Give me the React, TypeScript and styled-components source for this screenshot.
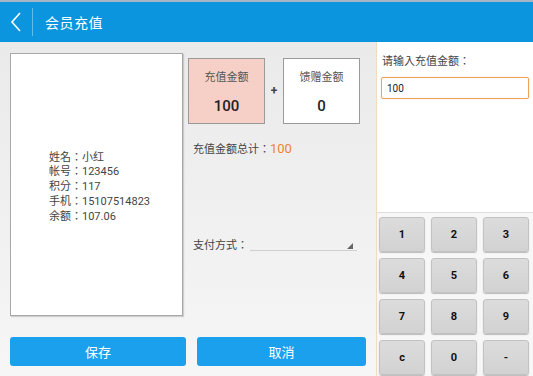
import React from 'react';
import styled, { createGlobalStyle } from 'styled-components';

const GlobalStyle = createGlobalStyle`
  html, body {
    margin: 0;
    padding: 0;
    width: 533px;
    height: 376px;
    overflow: hidden;
  }
  body {
    font-family: Roboto, "Noto Sans CJK TC", "Noto Sans CJK SC", sans-serif;
    color: #333;
  }
`;

const Screen = styled.div`
  width: 533px;
  height: 376px;
  display: flex;
  flex-direction: column;
`;

const Header = styled.div`
  height: 40px;
  border-top: 2px solid #a7b6c2;
  background: #0b95df;
  display: flex;
  align-items: center;
  color: #fff;
`;

const Back = styled.div`
  width: 33px;
  height: 28px;
  display: flex;
  align-items: center;
  justify-content: center;
  border-right: 1px solid rgba(255, 255, 255, 0.35);
  box-sizing: border-box;
`;

const Title = styled.div`
  margin-left: 12px;
  font-size: 14px;
  letter-spacing: 0.5px;
  font-family: Roboto, "Noto Sans CJK SC", sans-serif;
`;

const Body = styled.div`
  flex: 1;
  display: flex;
`;

const Main = styled.div`
  width: 376px;
  background: linear-gradient(#eaeaea, #f6f6f6);
  padding: 11px 0 0 10px;
  box-sizing: border-box;
  display: flex;
  flex-direction: column;
`;

const TopRow = styled.div`
  display: flex;
  height: 263px;
`;

const Card = styled.div`
  width: 173px;
  box-sizing: border-box;
  background: #fff;
  border: 1px solid #a8a8a8;
  box-shadow: 1px 1px 1px rgba(0, 0, 0, 0.15);
  display: flex;
  flex-direction: column;
  justify-content: center;
  padding: 6px 0 0 38px;
  font-size: 11px;
  line-height: 14.7px;
  color: #444;
`;

const Middle = styled.div`
  margin-left: 5px;
  padding-top: 5px;
  display: flex;
  flex-direction: column;
`;

const Amounts = styled.div`
  display: flex;
  align-items: center;
`;

const AmountBox = styled.div<{ $active?: boolean }>`
  width: 77px;
  height: 66px;
  box-sizing: border-box;
  border: 1px solid #9a9a9a;
  background: ${(p) => (p.$active ? '#f6d0c6' : '#fff')};
  display: flex;
  flex-direction: column;
  align-items: center;
  padding-top: 12px;
`;

const AmountLabel = styled.div`
  font-size: 11px;
  color: #555;
  line-height: 14px;
`;

const AmountValue = styled.div`
  margin-top: 12px;
  font-size: 15px;
  font-weight: 500;
  color: #222;
`;

const Plus = styled.div`
  width: 18px;
  text-align: center;
  font-size: 12px;
  font-weight: bold;
  color: #444;
`;

const Total = styled.div`
  margin-top: 18px;
  padding-left: 5px;
  font-size: 11px;
  line-height: 14px;
  color: #444;
  display: flex;
  align-items: baseline;
`;

const TotalValue = styled.span`
  font-size: 13px;
  color: #f0832a;
`;

const PayRow = styled.div`
  margin-top: 79px;
  padding-left: 5px;
  display: flex;
  align-items: center;
  font-size: 11px;
  color: #444;
`;

const PaySelect = styled.div`
  position: relative;
  margin-left: 2px;
  width: 107px;
  height: 12px;
  border-bottom: 1px solid #cfcfcf;
`;

const Corner = styled.div`
  position: absolute;
  right: 4px;
  bottom: 1px;
  width: 0;
  height: 0;
  border-left: 6px solid transparent;
  border-bottom: 6px solid #666;
`;

const Buttons = styled.div`
  margin-top: 21px;
  display: flex;
  gap: 11px;
`;

const ActionButton = styled.button<{ $w: number }>`
  width: ${(p) => p.$w}px;
  height: 29px;
  border: 0;
  border-radius: 3px;
  background: #1ba0ed;
  color: #fff;
  font-family: Roboto, "Noto Sans CJK SC", sans-serif;
  font-size: 13px;
  padding: 0;
`;

const Side = styled.div`
  flex: 1;
  border-left: 1px solid #f2dcc0;
  display: flex;
  flex-direction: column;
  background: #fff;
`;

const InputArea = styled.div`
  height: 170px;
  padding: 13px 4px 0 4px;
  box-sizing: border-box;
`;

const InputLabel = styled.div`
  font-size: 11px;
  line-height: 14px;
  color: #444;
  padding-left: 1px;
`;

const AmountInput = styled.div`
  margin-top: 8px;
  height: 22px;
  box-sizing: border-box;
  border: 1px solid #f0a15a;
  border-radius: 2px;
  box-shadow: 0 0 1px #f5b77c;
  padding-left: 5px;
  font-size: 10px;
  display: flex;
  align-items: center;
  color: #222;
`;

const Keypad = styled.div`
  flex: 1;
  border-top: 1px solid #dedede;
  background: #f7f7f7;
  padding: 4px 0 0 2px;
  display: grid;
  grid-template-columns: repeat(3, 46px);
  grid-auto-rows: 35px;
  gap: 6px;
`;

const Key = styled.button`
  border: 1px solid #c2c2c2;
  border-radius: 3px;
  background: linear-gradient(#dcdcdc, #d2d2d2);
  box-shadow: 0 1px 1px rgba(0, 0, 0, 0.25);
  font-family: inherit;
  font-size: 11px;
  font-weight: bold;
  color: #111;
  padding: 0;
`;

const keys = ['1', '2', '3', '4', '5', '6', '7', '8', '9', 'c', '0', '-'];

const info = [
  ['姓名', '小红'],
  ['帐号', '123456'],
  ['积分', '117'],
  ['手机', '15107514823'],
  ['余额', '107.06'],
];

export default function App() {
  return (
    <Screen>
      <GlobalStyle />
      <Header>
        <Back>
          <svg width="12" height="20" viewBox="0 0 12 20">
            <path d="M10 1 L2 10 L10 19" fill="none" stroke="#fff" strokeWidth="1.6" />
          </svg>
        </Back>
        <Title>会员充值</Title>
      </Header>
      <Body>
        <Main>
          <TopRow>
            <Card>
              {info.map(([k, v]) => (
                <div key={k}>
                  {k}：{v}
                </div>
              ))}
            </Card>
            <Middle>
              <Amounts>
                <AmountBox $active>
                  <AmountLabel>充值金额</AmountLabel>
                  <AmountValue>100</AmountValue>
                </AmountBox>
                <Plus>+</Plus>
                <AmountBox>
                  <AmountLabel>馈赠金额</AmountLabel>
                  <AmountValue>0</AmountValue>
                </AmountBox>
              </Amounts>
              <Total>
                充值金额总计：<TotalValue>100</TotalValue>
              </Total>
              <PayRow>
                支付方式：
                <PaySelect>
                  <Corner />
                </PaySelect>
              </PayRow>
            </Middle>
          </TopRow>
          <Buttons>
            <ActionButton $w={176}>保存</ActionButton>
            <ActionButton $w={169}>取消</ActionButton>
          </Buttons>
        </Main>
        <Side>
          <InputArea>
            <InputLabel>请输入充值金额：</InputLabel>
            <AmountInput>100</AmountInput>
          </InputArea>
          <Keypad>
            {keys.map((k) => (
              <Key key={k}>{k}</Key>
            ))}
          </Keypad>
        </Side>
      </Body>
    </Screen>
  );
}
